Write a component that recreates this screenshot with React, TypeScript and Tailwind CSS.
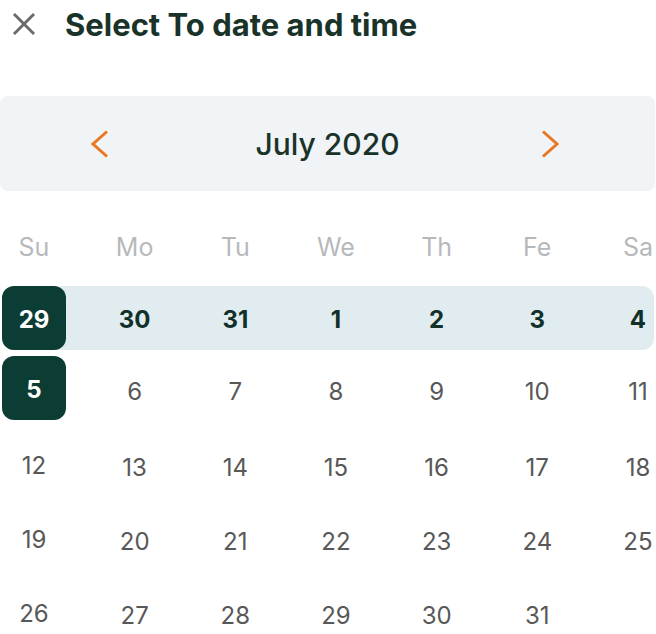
import React from 'react';

const days = ['Su', 'Mo', 'Tu', 'We', 'Th', 'Fe', 'Sa'];

const weeks: number[][] = [
  [12, 13, 14, 15, 16, 17, 18],
  [19, 20, 21, 22, 23, 24, 25],
  [26, 27, 28, 29, 30, 31],
];

const secondWeek = [6, 7, 8, 9, 10, 11];
const rangeRow = [30, 31, 1, 2, 3, 4];

const Cell: React.FC<{ children?: React.ReactNode; className?: string }> = ({ children, className = '' }) => (
  <div className={`w-16 h-16 flex items-center justify-center ${className}`}>{children}</div>
);

export default function App() {
  return (
    <div
      className="w-[656px] h-[634px] overflow-hidden bg-white"
      style={{ fontFamily: 'Inter, "Noto Sans", sans-serif' }}
    >
      {/* header */}
      <div className="flex items-center h-12 pl-3">
        <svg width="24" height="24" viewBox="0 0 24 24" className="shrink-0">
          <path d="M2 2 L22 22 M22 2 L2 22" stroke="#6b6b6b" strokeWidth="3" fill="none" />
        </svg>
        <h1 className="ml-[29px] pt-[1px] text-[31px] leading-none font-bold text-[#1a3329]">
          Select To date and time
        </h1>
      </div>

      {/* month switcher */}
      <div className="mt-12 h-[95px] w-[655px] rounded-lg bg-[#f0f4f7] flex items-center justify-between px-[86px]">
        <svg width="28" height="28" viewBox="0 0 28 28">
          <path d="M21 1.5 L7 14 L21 26.5" stroke="#ea7620" strokeWidth="3" fill="none" />
        </svg>
        <span className="text-[30px] font-medium text-[#1a3329] leading-none">July 2020</span>
        <svg width="28" height="28" viewBox="0 0 28 28">
          <path d="M2 1.5 L16 14 L2 26.5" stroke="#ea7620" strokeWidth="3" fill="none" />
        </svg>
      </div>

      {/* weekday labels */}
      <div className="mt-6 ml-[2px] grid grid-cols-[repeat(7,100.67px)]">
        {days.map((d) => (
          <Cell key={d} className="pt-[2px] text-[25px] text-[#b6b9bc]">
            {d}
          </Cell>
        ))}
      </div>

      {/* selected range week */}
      <div className="mt-[7px] ml-[2px] w-[652px] rounded-xl bg-[#e0ecef] grid grid-cols-[repeat(7,100.67px)]">
        <Cell className="rounded-xl bg-[#0b3d34] text-white text-[24px] font-bold pt-1">29</Cell>
        {rangeRow.map((n) => (
          <Cell key={n} className="text-[24px] font-bold text-[#12302a] pt-1">
            {n}
          </Cell>
        ))}
      </div>

      <div className="mt-[6px] ml-[2px] grid grid-cols-[repeat(7,100.67px)]">
        <Cell className="rounded-xl bg-[#0b3d34] text-white text-[24px] font-bold pt-1">5</Cell>
        {secondWeek.map((n) => (
          <Cell key={n} className="text-[24px] text-[#585858] pt-2">
            {n}
          </Cell>
        ))}
      </div>

      {/* rest of month */}
      {weeks.map((w, wi) => (
        <div
          key={wi}
          className={`ml-[2px] grid grid-cols-[repeat(7,100.67px)] ${wi === 0 ? 'mt-[12px]' : 'mt-[10px]'}`}
        >
          {w.map((n, i) => (
            <Cell key={n} className={`text-[24px] text-[#585858] ${i === 0 ? 'pt-1' : 'pt-2'}`}>
              {n}
            </Cell>
          ))}
        </div>
      ))}
    </div>
  );
}
